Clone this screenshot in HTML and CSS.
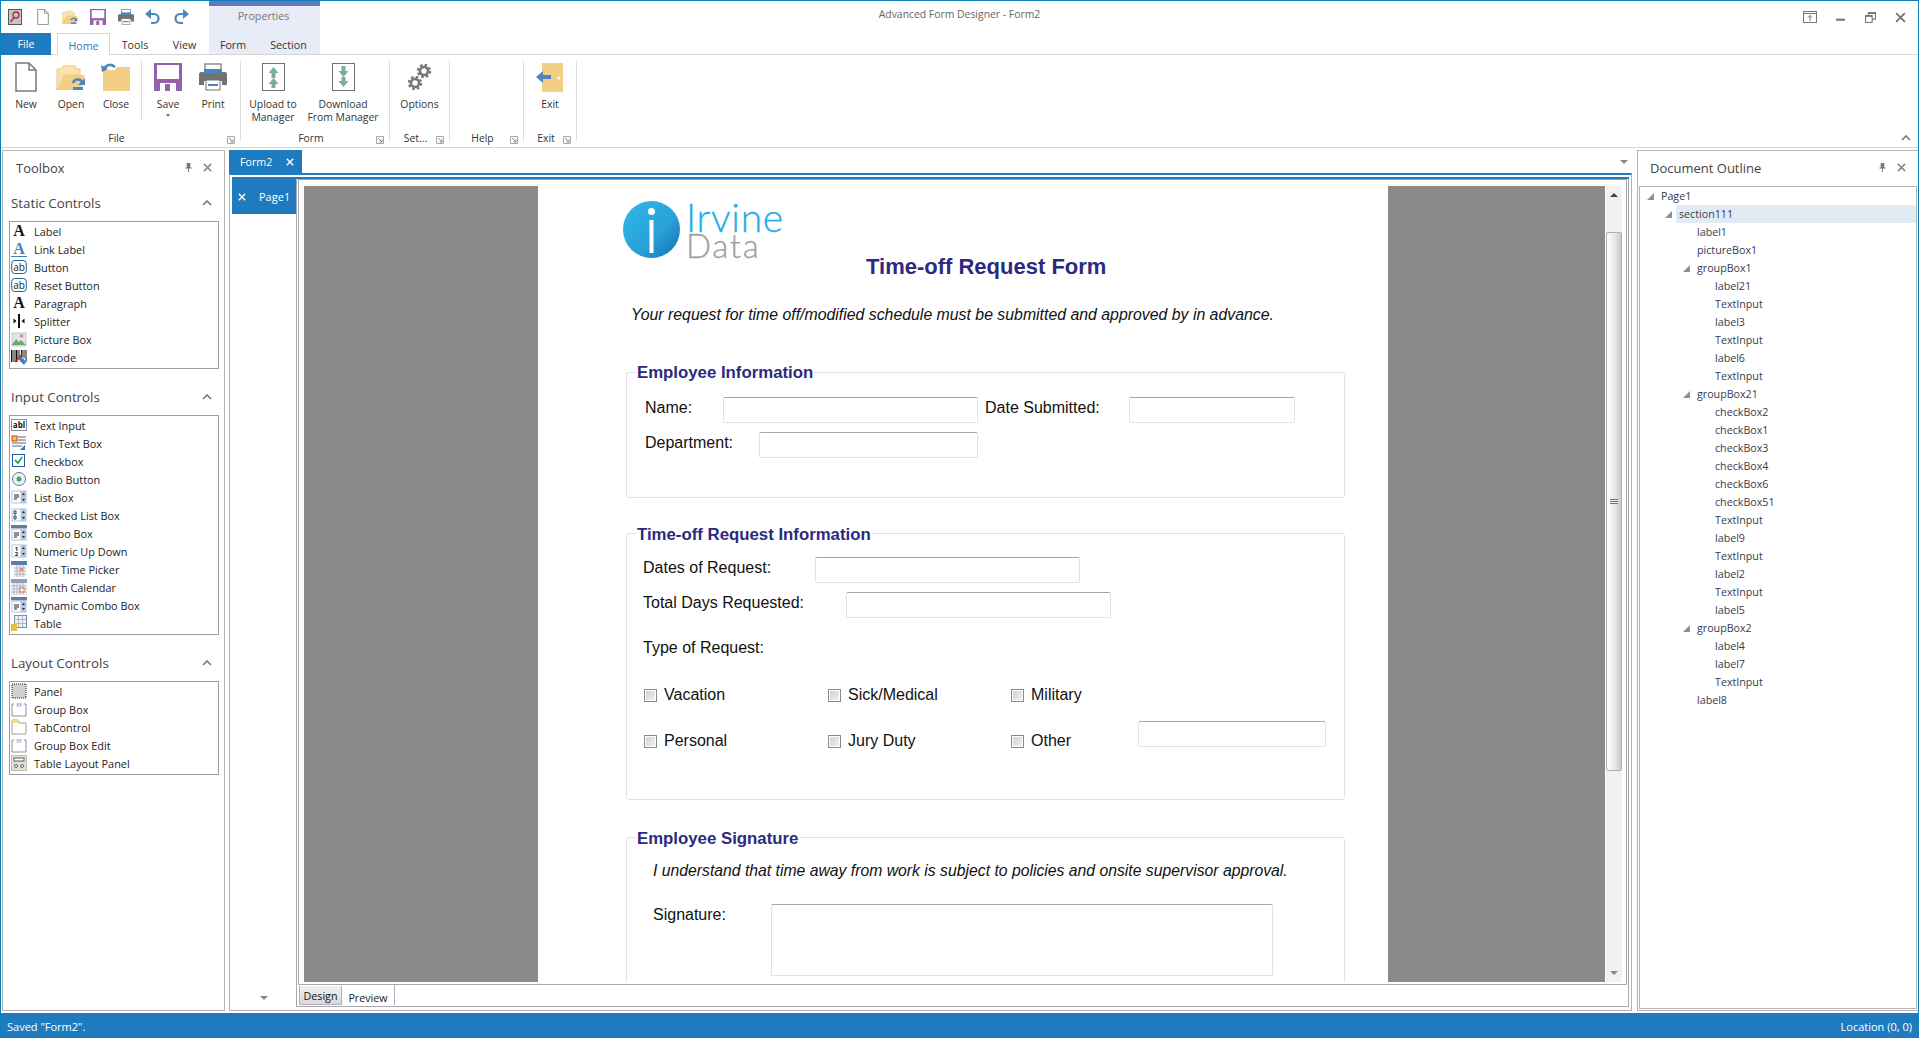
FILE: index.html
```html
<!DOCTYPE html>
<html lang="en">
<head>
  <meta charset="UTF-8">
  <title>Advanced Form Designer - Form2</title>
  <link rel="stylesheet" href="styles.css">
</head>
<body>
  <!-- Icon sprite -->
  <svg class="sprite" xmlns="http://www.w3.org/2000/svg">
    <defs>
      <linearGradient id="logo-fill" x1="0" y1="0" x2="1" y2="1">
        <stop offset="0" stop-color="#2fbbea"/>
        <stop offset="0.6" stop-color="#2a9fd8"/>
        <stop offset="1" stop-color="#1270b0"/>
      </linearGradient>
    </defs>
    <symbol id="i-app" viewBox="0 0 16 16">
      <rect x="1.5" y="0.5" width="13" height="15" fill="#c9c6c4" stroke="#555"/>
      <circle cx="9" cy="6" r="3" fill="none" stroke="#b02a30" stroke-width="1.3"/>
      <path d="M7 8.5 3.5 13" stroke="#b02a30" stroke-width="1.5"/>
    </symbol>
    <symbol id="i-new" viewBox="0 0 22 30">
      <path d="M1 1h13l7 7v21H1z" fill="#fff" stroke="#7a7a7a" stroke-width="1.5"/>
      <path d="M14 1v7h7" fill="none" stroke="#7a7a7a" stroke-width="1.5"/>
    </symbol>
    <symbol id="i-open" viewBox="0 0 30 30">
      <path d="M1 28V7h4l2-3h12l1 3h4v6H9L1 28z" fill="#f7e2b0" stroke="#eec979"/>
      <path d="M1 28 8 13h21l-5 15z" fill="#f2cf85"/>
      <path d="M17 21c1-4 7-5 9-1" fill="none" stroke="#4d86bd" stroke-width="2.6"/>
      <path d="M29 16v7h-7z" fill="#4d86bd"/>
      <path d="M17 25h10v3H17z" fill="#4d86bd"/>
    </symbol>
    <symbol id="i-close" viewBox="0 0 30 30">
      <path d="M2 29V8h12l2-3h13v24z" fill="#f2cf85"/>
      <path d="M3 8c1-5 7-7 11-3" fill="none" stroke="#4d86bd" stroke-width="2.6"/>
      <path d="M0 3l1 7 6-3z" fill="#4d86bd"/>
    </symbol>
    <symbol id="i-save" viewBox="0 0 28 28">
      <rect width="28" height="28" fill="#9462a9"/>
      <rect x="3" y="2" width="22" height="14" fill="#fff"/>
      <rect x="6" y="20" width="16" height="8" fill="#fff"/>
      <rect x="11" y="21" width="5" height="7" fill="#9462a9"/>
    </symbol>
    <symbol id="i-print" viewBox="0 0 28 28">
      <rect x="6" y="1" width="16" height="9" fill="#fff" stroke="#707274" stroke-width="1.2"/>
      <path d="M0 11c0-1 1-2 2-2h24c1 0 2 1 2 2v11h-5v-4H5v4H0z" fill="#707274"/>
      <rect x="5" y="6" width="18" height="4" fill="#4a86c0"/>
      <rect x="7" y="17" width="14" height="10" fill="#fff" stroke="#707274"/>
      <path d="M9 21h10v2H9z" fill="#4a86c0"/>
    </symbol>
    <symbol id="i-undo" viewBox="0 0 16 16">
      <path d="M5 5h4c6 0 6 9 0 9H6" fill="none" stroke="#4d86bd" stroke-width="2.2"/>
      <path d="M6 0v10L0 5z" fill="#4d86bd"/>
    </symbol>
    <symbol id="i-redo" viewBox="0 0 16 16">
      <path d="M11 5H7c-6 0-6 9 0 9h3" fill="none" stroke="#4d86bd" stroke-width="2.2"/>
      <path d="M10 0v10l6-5z" fill="#4d86bd"/>
    </symbol>
    <symbol id="i-upload" viewBox="0 0 23 28">
      <rect x="0.5" y="0.5" width="22" height="27" fill="#fff" stroke="#707070"/>
      <path d="M11.5 4l5 6h-3v5h-4v-5h-3zM11.5 15l5 6h-3v4h-4v-4h-3z" fill="#7cac9c"/>
    </symbol>
    <symbol id="i-download" viewBox="0 0 23 28">
      <rect x="0.5" y="0.5" width="22" height="27" fill="#fff" stroke="#707070"/>
      <path d="M9.5 3h4v5h3l-5 6-5-6h3zM9.5 14h4v4h3l-5 6-5-6h3z" fill="#7cac9c"/>
    </symbol>
    <symbol id="i-options" viewBox="0 0 25 30">
      <circle cx="17" cy="9" r="4" fill="none" stroke="#777" stroke-width="2.6"/>
      <circle cx="17" cy="9" r="6" fill="none" stroke="#777" stroke-width="2.4" stroke-dasharray="2.6 2.1"/>
      <circle cx="8" cy="21" r="4" fill="none" stroke="#777" stroke-width="2.6"/>
      <circle cx="8" cy="21" r="6" fill="none" stroke="#777" stroke-width="2.4" stroke-dasharray="2.6 2.1"/>
    </symbol>
    <symbol id="i-exit" viewBox="0 0 28 30">
      <rect x="6" y="1" width="21" height="29" fill="#f2cf85"/>
      <circle cx="23" cy="16" r="1.6" fill="#fff"/>
      <path d="M0 15l7-6v4h8v4H7v4z" fill="#4d86bd"/>
      <path d="M7 13h8v4H7z" fill="#4d86bd"/>
    </symbol>

    <symbol id="t-button" viewBox="0 0 16 16">
      <rect x="0.7" y="1.5" width="14.6" height="13" rx="3" fill="#fff" stroke="#1f5f99"/>
    </symbol>
    <symbol id="t-split" viewBox="0 0 16 16">
      <path d="M7 1h2v14H7z" fill="#111"/>
      <path d="M5.5 8 2.5 5.500v5zM10.500 8l3-2.500v5z" fill="#111"/>
    </symbol>
    <symbol id="t-picture" viewBox="0 0 16 16">
      <rect x="1" y="2" width="14" height="13" fill="#dce9f3" stroke="#9aa8b4" stroke-width="0.6"/>
      <circle cx="10.500" cy="5" r="1.800" fill="#e88a6a"/>
      <path d="M1 14l4-6 3 3 2-2 5 5z" fill="#6fa56f"/>
    </symbol>
    <symbol id="t-barcode" viewBox="0 0 16 16">
      <path d="M0 1h1.500v12H0zM2.500 1h1v12h-1zM4.500 1h2v12h-2zM7.500 1h1v10h-1zM10 1h1.500v7H10zM12.500 1h1v8h-1zM14.500 1h1v12h-1z" fill="#111"/>
      <path d="M6 9l4-2 5 6-2 3z" fill="#3f7fc4"/>
      <path d="M4 13 11 5" stroke="#d8242c" stroke-width="1.200"/>
    </symbol>
    <symbol id="t-text" viewBox="0 0 16 16">
      <rect x="0.500" y="2.500" width="15" height="11" fill="#fff" stroke="#8a8f96"/>
    </symbol>
    <symbol id="t-rich" viewBox="0 0 16 16">
      <rect x="1" y="1" width="5" height="5" fill="#e7d23c" stroke="#d33"/>
      <path d="M7 2h8M7 5h8M1 8h14M1 11h10" stroke="#55607a"/>
      <path d="M9 15l5-5v5z" fill="#3f6fb0"/>
    </symbol>
    <symbol id="t-check" viewBox="0 0 16 16">
      <rect x="1.500" y="1.500" width="12" height="12" fill="#fff" stroke="#1f5f99"/>
      <path d="M4 7l3 3 4-6" fill="none" stroke="#3aa655" stroke-width="1.800"/>
    </symbol>
    <symbol id="t-radio" viewBox="0 0 16 16">
      <circle cx="8" cy="8" r="6.500" fill="#eef2f6" stroke="#5a7a96"/>
      <circle cx="8" cy="8" r="2.500" fill="#4aa55f"/>
    </symbol>
    <symbol id="t-list" viewBox="0 0 16 16">
      <rect x="0.500" y="1.500" width="15" height="13" fill="#b4c6dc"/>
      <rect x="1.500" y="2.500" width="8" height="11" fill="#fff"/>
      <path d="M3 6h5M3 8h5M3 10h3" stroke="#222"/>
      <path d="M11 6l1.500-2 1.500 2zM11 10l1.500 2 1.500-2z" fill="#222"/>
    </symbol>
    <symbol id="t-checked" viewBox="0 0 16 16">
      <rect x="0.500" y="1.500" width="15" height="13" fill="#b4c6dc"/>
      <rect x="1.500" y="2.500" width="8" height="11" fill="#fff"/>
      <path d="M3 4h2v3H3zM3 9h2v3H3z" fill="none" stroke="#1f3f70"/>
      <path d="M11 6l1.500-2 1.500 2zM11 10l1.500 2 1.500-2z" fill="#222"/>
    </symbol>
    <symbol id="t-combo" viewBox="0 0 16 16">
      <rect x="0.500" y="0.500" width="15" height="15" fill="#b4c6dc"/>
      <path d="M0 0h16v3H0z" fill="#5a7fa8"/>
      <rect x="1.500" y="4.500" width="8" height="10" fill="#fff"/>
      <path d="M3 8h5M3 10h5M3 12h3" stroke="#222"/>
      <path d="M11 8l1.500-2 1.500 2zM11 11l1.500 2 1.500-2z" fill="#222"/>
    </symbol>
    <symbol id="t-numeric" viewBox="0 0 16 16">
      <rect x="0.500" y="1.500" width="15" height="13" fill="#b4c6dc"/>
      <rect x="1.500" y="2.500" width="8" height="11" fill="#fff"/>
      <path d="M11 6l1.500-2 1.500 2zM11 10l1.500 2 1.500-2z" fill="#222"/>
    </symbol>
    <symbol id="t-date" viewBox="0 0 16 16">
      <path d="M0 0h16v4H0z" fill="#5a7fa8"/>
      <path d="M3 4h12v12H3z" fill="#eef1f5"/>
      <path d="M3 7h12M3 10h12M3 13h12M6 4v12M9 4v12M12 4v12" stroke="#a3adba" stroke-width="0.800"/>
      <rect x="9" y="7" width="3" height="3" fill="#e6906f"/>
    </symbol>
    <symbol id="t-month" viewBox="0 0 16 16">
      <path d="M0 0h16v4H0z" fill="#8a9fc4"/>
      <path d="M0 4h16v12H0z" fill="#eef1f5"/>
      <path d="M0 7h16M0 10h16M0 13h16M3 4v12M6 4v12M9 4v12M12 4v12" stroke="#a3adba" stroke-width="0.800"/>
      <rect x="9" y="9" width="4" height="4" fill="#fff" stroke="#e2703f"/>
    </symbol>
    <symbol id="t-table" viewBox="0 0 16 16">
      <rect x="3.500" y="0.500" width="12" height="12" fill="#eef2f7" stroke="#7f8fa3"/>
      <path d="M3 4.500h12M3 8.500h12M7.500 1v11M11.500 1v11" stroke="#a8b8cc"/>
      <path d="M0 9h6v7H0z" fill="#e8c040"/>
    </symbol>
    <symbol id="t-panel" viewBox="0 0 16 16">
      <rect x="1" y="1" width="14" height="14" fill="#d0d0d0" stroke="#222" stroke-dasharray="1 1"/>
    </symbol>
    <symbol id="t-group" viewBox="0 0 16 16">
      <path d="M3 3H1v12h14V3h-2" fill="none" stroke="#8a8f96"/>
    </symbol>
    <symbol id="t-tab" viewBox="0 0 16 16">
      <path d="M1 1h6l1 3h7v11H1z" fill="#fff" stroke="#a0a0a0"/>
      <path d="M1 1h6l1 3H1z" fill="#f2dc9c"/>
    </symbol>
    <symbol id="t-layout" viewBox="0 0 16 16">
      <rect x="0.500" y="0.500" width="15" height="15" fill="#e4e0cc" stroke="#8f8f7a" stroke-dasharray="1 1"/>
      <rect x="3" y="3" width="10" height="3" fill="#fff" stroke="#55607a"/>
      <circle cx="5" cy="11" r="1.500" fill="#fff" stroke="#55607a"/>
      <circle cx="11" cy="11" r="1.500" fill="#fff" stroke="#55607a"/>
    </symbol>

    <symbol id="u-pin" viewBox="0 0 10 10">
      <path d="M3 0h4v5h1.500v1h-3v4h-1V6h-3V5H3z" fill="#777"/>
    </symbol>
    <symbol id="u-x" viewBox="0 0 10 10">
      <path d="M1 1l8 8M9 1 1 9" fill="none" stroke="currentColor" stroke-width="1.700"/>
    </symbol>
    <symbol id="u-chev" viewBox="0 0 10 6">
      <path d="M1 5l4-4 4 4" fill="none" stroke="#777" stroke-width="1.600"/>
    </symbol>
    <symbol id="u-launch" viewBox="0 0 8 8">
      <path d="M0.500 0.500h7v7h-7z" fill="none" stroke="#a8a8a8"/>
      <path d="M2 2l4 4M6 3.500V6H3.500" fill="none" stroke="#8a8a8a"/>
    </symbol>
    <symbol id="u-tree" viewBox="0 0 7 7">
      <path d="M7 0v7H0z" fill="#909090"/>
    </symbol>
    <symbol id="u-down" viewBox="0 0 8 4">
      <path d="M0 0h8L4 4z" fill="#888"/>
    </symbol>
    <symbol id="u-up" viewBox="0 0 8 4">
      <path d="M0 4h8L4 0z" fill="#444"/>
    </symbol>
    <symbol id="w-help" viewBox="0 0 14 12">
      <rect x="0.500" y="0.500" width="13" height="11" fill="none" stroke="#777"/>
      <path d="M1 2.500h12M7 10V4.500M5 6.500l2-2 2 2" fill="none" stroke="#777"/>
    </symbol>
    <symbol id="w-min" viewBox="0 0 10 10">
      <path d="M1 6h8v2H1z" fill="#777"/>
    </symbol>
    <symbol id="w-restore" viewBox="0 0 10 10">
      <path d="M0.500 3.500h6v6h-6zM3 3V0.500h6.500V6.500H7" fill="none" stroke="#777"/>
      <path d="M0.500 3.500h6M3 1h6.500" stroke="#777" stroke-width="1.500"/>
    </symbol>
  </svg>

  <div class="window">
    <!-- Title bar and ribbon tabs -->
    <div class="titlebar">
      <div class="qat">
        <svg class="qat-ico"><use href="#i-app"/></svg>
        <svg class="qat-ico"><use href="#i-new"/></svg>
        <svg class="qat-ico"><use href="#i-open"/></svg>
        <svg class="qat-ico"><use href="#i-save"/></svg>
        <svg class="qat-ico"><use href="#i-print"/></svg>
        <svg class="qat-ico"><use href="#i-undo"/></svg>
        <svg class="qat-ico"><use href="#i-redo"/></svg>
      </div>
      <div class="ctx-head">Properties</div>
      <div class="window-title">Advanced Form Designer - Form2</div>
      <div class="window-btns">
        <svg class="win-help"><use href="#w-help"/></svg>
        <svg class="win-btn"><use href="#w-min"/></svg>
        <svg class="win-btn"><use href="#w-restore"/></svg>
        <svg class="win-btn win-close"><use href="#u-x"/></svg>
      </div>
    </div>
    <div class="tabrow">
      <div class="tab-file">File</div>
      <div class="tab-home">Home</div>
      <div class="tab tab-tools">Tools</div>
      <div class="tab tab-view">View</div>
      <div class="ctx-tabs">
        <div class="tab tab-form">Form</div>
        <div class="tab tab-section">Section</div>
      </div>
    </div>

    <!-- Ribbon -->
    <div class="ribbon">
      <div class="rgroup rg-file">
        <div class="rgroup-items">
          <div class="rbtn rbtn-50"><svg class="ric ric-new"><use href="#i-new"/></svg><span>New</span></div>
          <div class="rbtn rbtn-40"><svg class="ric ric-30"><use href="#i-open"/></svg><span>Open</span></div>
          <div class="rbtn rbtn-50"><svg class="ric ric-30"><use href="#i-close"/></svg><span>Close</span></div>
          <div class="rsep"></div>
          <div class="rbtn rbtn-50"><svg class="ric ric-28"><use href="#i-save"/></svg><span>Save</span><i class="caret"></i></div>
          <div class="rbtn rbtn-40"><svg class="ric ric-28"><use href="#i-print"/></svg><span>Print</span></div>
        </div>
        <div class="rgroup-foot"><span>File</span><svg class="launch"><use href="#u-launch"/></svg></div>
      </div>
      <div class="rgroup rg-form">
        <div class="rgroup-items">
          <div class="rbtn rbtn-64"><svg class="ric ric-23"><use href="#i-upload"/></svg><span>Upload to<br>Manager</span></div>
          <div class="rbtn rbtn-76"><svg class="ric ric-23"><use href="#i-download"/></svg><span>Download<br>From Manager</span></div>
        </div>
        <div class="rgroup-foot"><span>Form</span><svg class="launch"><use href="#u-launch"/></svg></div>
      </div>
      <div class="rgroup rg-set">
        <div class="rgroup-items">
          <div class="rbtn rbtn-59"><svg class="ric ric-25"><use href="#i-options"/></svg><span>Options</span></div>
        </div>
        <div class="rgroup-foot"><span>Set...</span><svg class="launch"><use href="#u-launch"/></svg></div>
      </div>
      <div class="rgroup rg-help">
        <div class="rgroup-items"></div>
        <div class="rgroup-foot"><span>Help</span><svg class="launch"><use href="#u-launch"/></svg></div>
      </div>
      <div class="rgroup rg-exit">
        <div class="rgroup-items">
          <div class="rbtn rbtn-52"><svg class="ric ric-30"><use href="#i-exit"/></svg><span>Exit</span></div>
        </div>
        <div class="rgroup-foot"><span>Exit</span><svg class="launch"><use href="#u-launch"/></svg></div>
      </div>
      <svg class="ribbon-collapse"><use href="#u-chev"/></svg>
    </div>

    <div class="main">
      <!-- Toolbox -->
      <aside class="toolbox">
        <div class="panel-head">
          <span class="panel-title">Toolbox</span>
          <svg class="panel-pin"><use href="#u-pin"/></svg>
          <svg class="panel-x"><use href="#u-x"/></svg>
        </div>
        <div class="tool-head"><span>Static Controls</span><svg class="tool-chev"><use href="#u-chev"/></svg></div>
        <ul class="tool-list">
          <li><b class="glyph-a">A</b><span>Label</span></li>
          <li><b class="glyph-a glyph-link">A</b><span>Link Label</span></li>
          <li><svg viewBox="0 0 16 16"><use href="#t-button"/><text x="8" y="11.500" text-anchor="middle" class="svg-sans" fill="#222">ab</text></svg><span>Button</span></li>
          <li><svg viewBox="0 0 16 16"><use href="#t-button"/><text x="8" y="11.500" text-anchor="middle" class="svg-sans" fill="#222">ab</text></svg><span>Reset Button</span></li>
          <li><b class="glyph-a">A</b><span>Paragraph</span></li>
          <li><svg><use href="#t-split"/></svg><span>Splitter</span></li>
          <li><svg><use href="#t-picture"/></svg><span>Picture Box</span></li>
          <li><svg><use href="#t-barcode"/></svg><span>Barcode</span></li>
        </ul>
        <div class="tool-head tool-head-next"><span>Input Controls</span><svg class="tool-chev"><use href="#u-chev"/></svg></div>
        <ul class="tool-list">
          <li><svg viewBox="0 0 16 16"><use href="#t-text"/><text x="8" y="11" text-anchor="middle" class="svg-tiny" fill="#111">abl</text></svg><span>Text Input</span></li>
          <li><svg><use href="#t-rich"/></svg><span>Rich Text Box</span></li>
          <li><svg><use href="#t-check"/></svg><span>Checkbox</span></li>
          <li><svg><use href="#t-radio"/></svg><span>Radio Button</span></li>
          <li><svg><use href="#t-list"/></svg><span>List Box</span></li>
          <li><svg><use href="#t-checked"/></svg><span>Checked List Box</span></li>
          <li><svg><use href="#t-combo"/></svg><span>Combo Box</span></li>
          <li><svg viewBox="0 0 16 16"><use href="#t-numeric"/><text x="5.500" y="8" text-anchor="middle" class="svg-num" fill="#111">1</text><text x="5.500" y="13" text-anchor="middle" class="svg-num" fill="#111">2</text></svg><span>Numeric Up Down</span></li>
          <li><svg><use href="#t-date"/></svg><span>Date Time Picker</span></li>
          <li><svg><use href="#t-month"/></svg><span>Month Calendar</span></li>
          <li><svg><use href="#t-combo"/></svg><span>Dynamic Combo Box</span></li>
          <li><svg><use href="#t-table"/></svg><span>Table</span></li>
        </ul>
        <div class="tool-head tool-head-next"><span>Layout Controls</span><svg class="tool-chev"><use href="#u-chev"/></svg></div>
        <ul class="tool-list">
          <li><svg><use href="#t-panel"/></svg><span>Panel</span></li>
          <li><svg viewBox="0 0 16 16"><use href="#t-group"/><text x="8" y="5.500" text-anchor="middle" class="svg-xy" fill="#3f6fb0">XY</text></svg><span>Group Box</span></li>
          <li><svg><use href="#t-tab"/></svg><span>TabControl</span></li>
          <li><svg viewBox="0 0 16 16"><use href="#t-group"/><text x="8" y="5.500" text-anchor="middle" class="svg-xy" fill="#3f6fb0">XY</text></svg><span>Group Box Edit</span></li>
          <li><svg><use href="#t-layout"/></svg><span>Table Layout Panel</span></li>
        </ul>
      </aside>

      <!-- Document area -->
      <section class="doc">
        <div class="doc-tabs">
          <div class="doc-tab"><span>Form2</span><svg class="tab-x"><use href="#u-x"/></svg></div>
          <svg class="doc-tabs-menu"><use href="#u-down"/></svg>
        </div>
        <div class="doc-body">
          <div class="page-wrap">
            <div class="page-tabs">
              <div class="page-tab"><svg class="tab-x"><use href="#u-x"/></svg><span>Page1</span></div>
              <svg class="page-tabs-more"><use href="#u-down"/></svg>
            </div>
            <div class="page-pane">
              <div class="surface">
                <div class="viewport">
                  <div class="strip strip-left"></div>
                  <div class="sheet">
                    <div class="logo">
                      <svg class="logo-mark" viewBox="0 0 57 57">
                        <circle cx="28.500" cy="28.500" r="28.500" fill="url(#logo-fill)"/>
                        <circle cx="28.500" cy="10.500" r="3.500" fill="#fff"/>
                        <rect x="26.500" y="19" width="4" height="33" fill="#fff"/>
                      </svg>
                      <div class="logo-text">
                        <span class="logo-irvine">Irvine</span>
                        <span class="logo-data">Data</span>
                      </div>
                    </div>
                    <h1 class="form-title">Time-off Request Form</h1>
                    <p class="form-intro">Your request for time off/modified schedule must be submitted and approved by in advance.</p>

                    <div class="group group-employee">
                      <h2 class="group-title">Employee Information</h2>
                      <div class="row row-first">
                        <label class="lbl w78">Name:</label>
                        <input class="field w255">
                        <label class="lbl lbl-date">Date Submitted:</label>
                        <input class="field w166">
                      </div>
                      <div class="row row-next">
                        <label class="lbl w114">Department:</label>
                        <input class="field w219">
                      </div>
                    </div>

                    <div class="group group-timeoff">
                      <h2 class="group-title">Time-off Request Information</h2>
                      <div class="row row-first">
                        <label class="lbl lbl-low w172">Dates of Request:</label>
                        <input class="field w265">
                      </div>
                      <div class="row row-total">
                        <label class="lbl lbl-low w203">Total Days Requested:</label>
                        <input class="field w265">
                      </div>
                      <div class="row row-type">
                        <label class="lbl">Type of Request:</label>
                      </div>
                      <div class="checks checks-a">
                        <div class="chk"><span class="box"></span>Vacation</div>
                        <div class="chk"><span class="box"></span>Sick/Medical</div>
                        <div class="chk"><span class="box"></span>Military</div>
                      </div>
                      <div class="checks checks-b">
                        <div class="chk"><span class="box"></span>Personal</div>
                        <div class="chk"><span class="box"></span>Jury Duty</div>
                        <div class="chk"><span class="box"></span>Other</div>
                        <input class="field w188 field-other">
                      </div>
                    </div>

                    <div class="group group-sign">
                      <h2 class="group-title">Employee Signature</h2>
                      <p class="sign-note">I understand that time away from work is subject to policies and onsite supervisor approval.</p>
                      <div class="row row-sign">
                        <label class="lbl lbl-low w118">Signature:</label>
                        <div class="sign-box"></div>
                      </div>
                    </div>
                  </div>
                  <div class="strip strip-right"></div>
                </div>
                <div class="scrollbar">
                  <div class="sb-btn"><svg class="sb-arrow"><use href="#u-up"/></svg></div>
                  <div class="sb-thumb"><i></i><i></i><i></i></div>
                  <div class="sb-track"></div>
                  <div class="sb-btn sb-btn-down"><svg class="sb-arrow"><use href="#u-down"/></svg></div>
                </div>
              </div>
              <div class="view-tabs">
                <div class="view-design">Design</div>
                <div class="view-preview">Preview</div>
              </div>
            </div>
          </div>
        </div>
      </section>

      <!-- Document outline -->
      <aside class="outline">
        <div class="panel-head panel-head-outline">
          <span class="panel-title">Document Outline</span>
          <svg class="panel-pin"><use href="#u-pin"/></svg>
          <svg class="panel-x"><use href="#u-x"/></svg>
        </div>
        <ul class="tree">
          <li class="lv0"><svg class="twist"><use href="#u-tree"/></svg><span>Page1</span></li>
          <li class="lv1 selected"><svg class="twist"><use href="#u-tree"/></svg><span>section111</span></li>
          <li class="lv2"><span>label1</span></li>
          <li class="lv2"><span>pictureBox1</span></li>
          <li class="lv2"><svg class="twist"><use href="#u-tree"/></svg><span>groupBox1</span></li>
          <li class="lv3"><span>label21</span></li>
          <li class="lv3"><span>TextInput</span></li>
          <li class="lv3"><span>label3</span></li>
          <li class="lv3"><span>TextInput</span></li>
          <li class="lv3"><span>label6</span></li>
          <li class="lv3"><span>TextInput</span></li>
          <li class="lv2"><svg class="twist"><use href="#u-tree"/></svg><span>groupBox21</span></li>
          <li class="lv3"><span>checkBox2</span></li>
          <li class="lv3"><span>checkBox1</span></li>
          <li class="lv3"><span>checkBox3</span></li>
          <li class="lv3"><span>checkBox4</span></li>
          <li class="lv3"><span>checkBox6</span></li>
          <li class="lv3"><span>checkBox51</span></li>
          <li class="lv3"><span>TextInput</span></li>
          <li class="lv3"><span>label9</span></li>
          <li class="lv3"><span>TextInput</span></li>
          <li class="lv3"><span>label2</span></li>
          <li class="lv3"><span>TextInput</span></li>
          <li class="lv3"><span>label5</span></li>
          <li class="lv2"><svg class="twist"><use href="#u-tree"/></svg><span>groupBox2</span></li>
          <li class="lv3"><span>label4</span></li>
          <li class="lv3"><span>label7</span></li>
          <li class="lv3"><span>TextInput</span></li>
          <li class="lv2"><span>label8</span></li>
        </ul>
      </aside>
    </div>

    <!-- Status bar -->
    <div class="statusbar">
      <span>Saved "Form2".</span>
      <span>Location (0, 0)</span>
    </div>
  </div>
</body>
</html>
```

FILE: styles.css
```css
/* General */
* {
  box-sizing: border-box;
}
html, body {
  margin: 0;
  padding: 0;
  height: 100%;
  overflow: hidden;
  background: #fff;
}
body {
  font-family: "Open Sans", sans-serif;
  font-size: 11px;
  color: #333;
}
ul {
  list-style: none;
  margin: 0;
  padding: 0;
}
svg {
  display: block;
  flex-shrink: 0;
}
.sprite {
  position: absolute;
  width: 0;
  height: 0;
}
.svg-sans {
  font: 10px "Open Sans", sans-serif;
}
.svg-tiny {
  font: bold 8px "Open Sans", sans-serif;
}
.svg-num {
  font: bold 6px "Open Sans", sans-serif;
}
.svg-xy {
  font: 5px "Open Sans", sans-serif;
}

.window {
  width: 1919px;
  height: 1038px;
  border: 1px solid #0f7fb5;
  border-bottom: none;
  display: flex;
  flex-direction: column;
}

/* Title bar */
.titlebar {
  position: relative;
  height: 32px;
  display: flex;
  flex-shrink: 0;
}
.qat {
  width: 208px;
  display: flex;
  align-items: center;
  gap: 11.7px;
  padding: 0 0 0 6px;
}
.qat-ico {
  width: 16px;
  height: 16px;
}
.ctx-head {
  width: 111px;
  padding-right: 2px;
  background: #e8ecf7;
  border-top: 5px solid #5f78c0;
  text-align: center;
  color: #777;
  font-size: 10.7px;
  line-height: 21px;
}
.window-title {
  position: absolute;
  left: 0;
  right: 0;
  top: 6px;
  text-align: center;
  font-size: 10.4px;
  color: #666;
}
.window-btns {
  margin-left: auto;
  display: flex;
  align-items: center;
  gap: 19px;
  padding: 0 12px 0 0;
}
.win-help {
  width: 14px;
  height: 12px;
  margin-right: -1px;
}
.win-btn {
  width: 11px;
  height: 11px;
}
.win-close {
  color: #777;
}

/* Ribbon tabs */
.tabrow {
  height: 22px;
  display: flex;
  border-bottom: 1px solid #d6d6d6;
  flex-shrink: 0;
  font-size: 10.7px;
}
.tab-file {
  width: 50px;
  background: #1f7bc0;
  color: #fff;
  text-align: center;
  line-height: 22px;
  margin-bottom: -1px;
  margin-right: 2px;
}
.tab-home {
  width: 53px;
  margin: 0 0 -1px 4px;
  border: 1px solid #d6d6d6;
  border-bottom: none;
  background: #fff;
  color: #1f7bc0;
  text-align: center;
  line-height: 24px;
}
.tab {
  text-align: center;
  line-height: 24px;
}
.tab-tools {
  width: 50px;
}
.tab-view {
  width: 49px;
}
.ctx-tabs {
  display: flex;
  background: #e8ecf7;
}
.tab-form {
  width: 48px;
}
.tab-section {
  width: 63px;
}

/* Ribbon */
.ribbon {
  height: 93px;
  display: flex;
  align-items: flex-start;
  padding-top: 6px;
  border-bottom: 1px solid #d6d6d6;
  flex-shrink: 0;
  font-size: 10.4px;
}
.rgroup {
  height: 80px;
  display: flex;
  flex-direction: column;
  border-right: 1px solid #dcdcdc;
}
.rg-file {
  width: 240px;
}
.rg-form {
  width: 149px;
}
.rg-set {
  width: 60px;
}
.rg-help {
  width: 74px;
}
.rg-exit {
  width: 53px;
}
.rgroup-items {
  height: 70px;
  display: flex;
  flex-shrink: 0;
}
.rbtn {
  display: flex;
  flex-direction: column;
  align-items: center;
  text-align: center;
  line-height: 13px;
  padding-top: 1px;
}
.rbtn span {
  position: relative;
  top: 6px;
}
.rbtn-40 {
  width: 40px;
}
.rbtn-50 {
  width: 50px;
}
.rbtn-52 {
  width: 52px;
}
.rbtn-59 {
  width: 59px;
}
.rbtn-64 {
  width: 64px;
}
.rbtn-76 {
  width: 76px;
}
.ric {
  height: 30px;
}
.ric-new {
  width: 22px;
}
.ric-30 {
  width: 30px;
}
.ric-28 {
  width: 28px;
}
.ric-25 {
  width: 25px;
}
.ric-23 {
  width: 23px;
}
.caret {
  width: 0;
  height: 0;
  margin-top: 9px;
  border: 2px solid transparent;
  border-top: 3px solid #777;
}
.rsep {
  width: 1px;
  height: 60px;
  margin-right: 1px;
  background: #dcdcdc;
}
.rgroup-foot {
  height: 14px;
  flex-shrink: 0;
  display: flex;
  align-items: center;
  line-height: 14px;
}
.rgroup-foot span {
  flex: 1;
  text-align: center;
  padding-left: 5px;
}
.launch {
  width: 8px;
  height: 8px;
  margin: 3px 5px 0 0;
}
.ribbon-collapse {
  width: 10px;
  height: 6px;
  margin: 74px 0 0 auto;
  margin-right: 7px;
}

/* Panels */
.main {
  flex: 1;
  min-height: 0;
  display: flex;
  padding: 2px 0 2px 1px;
}
.toolbox {
  width: 223px;
  border: 1px solid #b4b4b4;
}
.panel-head {
  height: 33px;
  margin-bottom: 2px;
  display: flex;
  align-items: center;
  padding-left: 13px;
}
.panel-title {
  flex: 1;
  font-size: 13px;
  color: #444;
}
.panel-pin {
  width: 9px;
  height: 9px;
  margin-right: 10px;
}
.panel-x {
  width: 9px;
  height: 9px;
  margin-right: 12px;
  color: #888;
}

/* Toolbox lists */
.tool-head {
  height: 34px;
  margin-bottom: 1px;
  padding: 0 12px 0 8px;
  display: flex;
  align-items: center;
  justify-content: space-between;
  font-size: 13.3px;
  color: #444;
}
.tool-head-next {
  margin-top: 11px;
}
.tool-chev {
  width: 10px;
  height: 6px;
}
.tool-list {
  width: 210px;
  margin-left: 6px;
  padding: 0 0 2px 1px;
  border: 1px solid #9a9aa8;
}
.tool-list li {
  height: 18px;
  display: flex;
  align-items: center;
  gap: 7px;
  color: #222;
  font-size: 10.9px;
}
.tool-list svg {
  width: 16px;
  height: 16px;
}
.glyph-a {
  width: 16px;
  height: 16px;
  text-align: center;
  font: bold 16px/16px "Liberation Serif", serif;
  color: #111;
}
.glyph-link {
  color: #3f7fc4;
  border-bottom: 1px solid #3f7fc4;
  line-height: 15px;
}

/* Document area */
.doc {
  width: 1403px;
  margin-left: 4px;
  display: flex;
  flex-direction: column;
}
.doc-tabs {
  height: 23px;
  display: flex;
  align-items: center;
  flex-shrink: 0;
}
.doc-tab {
  width: 73px;
  height: 23px;
  background: #1f7bc0;
  color: #fff;
  display: flex;
  align-items: center;
  padding-left: 11px;
  font-size: 10.7px;
}
.tab-x {
  width: 8px;
  height: 8px;
  color: #fff;
}
.doc-tab .tab-x {
  margin-left: 14px;
}
.doc-tabs-menu {
  width: 8px;
  height: 4px;
  margin-left: auto;
  margin-right: 4px;
}
.doc-body {
  flex: 1;
  min-height: 0;
  border: 1px solid #b4b4b4;
  border-top: 2px solid #1f7bc0;
  padding: 2px 2px 3px 2px;
}
.page-wrap {
  height: 100%;
  display: flex;
  border-top: 2px solid #1f7bc0;
}
.page-tabs {
  width: 64px;
  display: flex;
  flex-direction: column;
  align-items: center;
}
.page-tab {
  width: 64px;
  height: 35px;
  background: #1f7bc0;
  color: #fff;
  display: flex;
  align-items: center;
  gap: 13px;
  padding-left: 6px;
}
.page-tabs-more {
  width: 8px;
  height: 4px;
  margin: auto 0 7px;
}
.page-pane {
  flex: 1;
  min-width: 0;
  display: flex;
  flex-direction: column;
  border: 1px solid #a8a8b0;
  border-top: none;
}
.surface {
  height: 806px;
  display: flex;
  gap: 1px;
  padding: 6px 3px 3px 5px;
  border: 1px solid #a8a8b0;
  margin-left: 1px;
  margin-right: 1px;
  border-top-color: #a0a0a0;
}
.viewport {
  width: 1301px;
  height: 796px;
  display: flex;
  overflow: hidden;
}
.strip {
  background: #8a8a8a;
  flex-shrink: 0;
}
.strip-left {
  width: 234px;
}
.strip-right {
  width: 217px;
}

/* Form sheet */
.sheet {
  width: 850px;
  flex-shrink: 0;
  font-family: "Liberation Sans", Arial, sans-serif;
  font-size: 16px;
  color: #111;
}
.logo {
  display: flex;
  gap: 6px;
  margin: 15px 0 0 85px;
  height: 57px;
}
.logo-mark {
  width: 57px;
  height: 57px;
}
.logo-text {
  display: flex;
  flex-direction: column;
  font-family: Lato, sans-serif;
  font-weight: 300;
}
.logo-irvine {
  font-size: 39px;
  line-height: 33px;
  letter-spacing: 0.7px;
  color: #25ade6;
  -webkit-text-stroke: 0.3px #25ade6;
}
.logo-data {
  margin-top: -1px;
  font-size: 33px;
  line-height: 24px;
  letter-spacing: 1.7px;
  color: #a0a0a0;
  -webkit-text-stroke: 0.3px #a0a0a0;
}
.form-title {
  margin: -3px 0 0 328px;
  font-size: 22px;
  line-height: 24px;
  font-weight: bold;
  color: #2b2a7e;
}
.form-intro {
  margin: 26px 0 0 93px;
  font-size: 15.85px;
  font-style: italic;
  line-height: 20px;
}
.group {
  width: 719px;
  margin-left: 88px;
  border: 1px solid #dde3ea;
  border-radius: 3px;
}
.group-employee {
  height: 126px;
  margin-top: 47px;
  padding-left: 18px;
}
.group-timeoff {
  height: 267px;
  margin-top: 35px;
  padding-left: 16px;
}
.group-sign {
  height: 200px;
  margin-top: 37px;
  padding-left: 26px;
}
.group-title {
  width: fit-content;
  margin: -10px 0 0 -9px;
  padding: 0 1px;
  background: #fff;
  font-size: 16.8px;
  line-height: 20px;
  font-weight: bold;
  color: #2b2a7e;
}
.group-timeoff .group-title {
  margin: -9px 0 0 -7px;
}
.group-sign .group-title {
  margin: -9px 0 0 -17px;
}
.row {
  display: flex;
  align-items: flex-start;
}
.row-first {
  margin-top: 14px;
}
.group-timeoff .row-first {
  margin-top: 12px;
}
.row-next {
  margin-top: 9px;
}
.row-total {
  margin-top: 9px;
}
.row-type {
  margin-top: 20px;
}
.lbl {
  line-height: 20px;
  flex-shrink: 0;
}
.group-employee .lbl,
.lbl-low {
  padding-top: 1px;
}
.lbl-date {
  width: 144px;
  margin-left: 7px;
}
.w78 {
  width: 78px;
}
.w114 {
  width: 114px;
}
.w118 {
  width: 118px;
}
.w172 {
  width: 172px;
}
.w203 {
  width: 203px;
}
.field {
  display: block;
  height: 26px;
  margin: 0;
  padding: 0;
  background: #fff;
  border: 1px solid #dfe3e8;
  border-top-color: #a8a8a8;
  border-radius: 2px;
}
.w166 {
  width: 166px;
}
.w188 {
  width: 188px;
}
.w219 {
  width: 219px;
}
.w255 {
  width: 255px;
}
.w265 {
  width: 265px;
}
.checks {
  display: grid;
  grid-template-columns: 184px 183px 127px 188px;
  padding-left: 1px;
}
.checks-a {
  margin-top: 27px;
}
.checks-b {
  margin-top: 26px;
}
.chk {
  display: flex;
  align-items: center;
  gap: 7px;
  line-height: 20px;
}
.box {
  width: 13px;
  height: 13px;
  border: 1px solid #8a8a8a;
  background: linear-gradient(135deg, #d0d0d0, #f2f2f2);
  box-shadow: inset 0 0 0 1px #fff;
}
.field-other {
  margin-top: -10px;
}
.sign-note {
  margin: 12px 0 0;
  font-size: 15.75px;
  font-style: italic;
  line-height: 20px;
}
.row-sign {
  margin-top: 23px;
}
.sign-box {
  width: 502px;
  height: 72px;
  border: 1px solid #dfe3e8;
  border-top-color: #a8a8a8;
  border-radius: 2px;
}

/* Scrollbar */
.scrollbar {
  width: 16px;
  height: 796px;
  display: flex;
  flex-direction: column;
  background: #f1f1f1;
}
.sb-btn {
  height: 18px;
  display: flex;
  align-items: center;
  justify-content: center;
}
.sb-btn-down {
  margin-top: auto;
}
.sb-arrow {
  width: 8px;
  height: 4px;
}
.sb-thumb {
  height: 539px;
  margin: 28px 0 0;
  border: 1px solid #b0b0b0;
  border-radius: 2px;
  background: linear-gradient(90deg, #fdfdfd, #e8e8e8 55%, #c9c9c9);
  display: flex;
  flex-direction: column;
  align-items: center;
  justify-content: center;
  gap: 1px;
}
.sb-thumb i {
  display: block;
  width: 8px;
  height: 1px;
  background: #777;
}
.sb-track {
  flex: 1;
}

/* Design / Preview */
.view-tabs {
  flex: 1;
  display: flex;
  align-items: flex-start;
  padding-left: 2px;
  font-size: 10.7px;
}
.view-design {
  width: 43px;
  height: 19px;
  margin-top: 1px;
  border: 1px solid #b4b4b4;
  border-top: none;
  background: linear-gradient(#f2f2f2, #d8d8d8);
  text-align: center;
  line-height: 20px;
  color: #111;
}
.view-preview {
  width: 53px;
  height: 20px;
  border-right: 1px solid #b4b4b4;
  text-align: center;
  line-height: 26px;
  color: #222;
}

/* Outline */
.outline {
  width: 281px;
  margin-left: 5px;
  border: 1px solid #b4b4b4;
  border-right: none;
  display: flex;
  flex-direction: column;
  padding: 0 1px 1px 1px;
}
.panel-head-outline {
  padding-left: 11px;
}
.panel-head-outline .panel-x {
  margin-right: 11px;
}
.tree {
  flex: 1;
  border: 1px solid #b4b4b4;
}
.tree li {
  height: 18px;
  display: flex;
  align-items: center;
  color: #3a3a50;
  font-size: 10.7px;
}
.tree li span {
  flex: 1;
  height: 18px;
  line-height: 18px;
}
.twist {
  width: 7px;
  height: 7px;
  margin-right: 7px;
}
.lv0 {
  padding-left: 7px;
}
.lv1 {
  padding-left: 25px;
}
.lv2 {
  padding-left: 43px;
}
.lv3 {
  padding-left: 75px;
}
.lv2 > span:first-child {
  margin-left: 14px;
}
.selected span {
  margin-left: -3px;
  padding-left: 3px;
  background: #e1ebf4;
}

/* Status bar */
.statusbar {
  height: 25px;
  flex-shrink: 0;
  background: #1f7bc0;
  color: #fff;
  display: flex;
  align-items: center;
  justify-content: space-between;
  padding: 1px 6px 0;
}
```
